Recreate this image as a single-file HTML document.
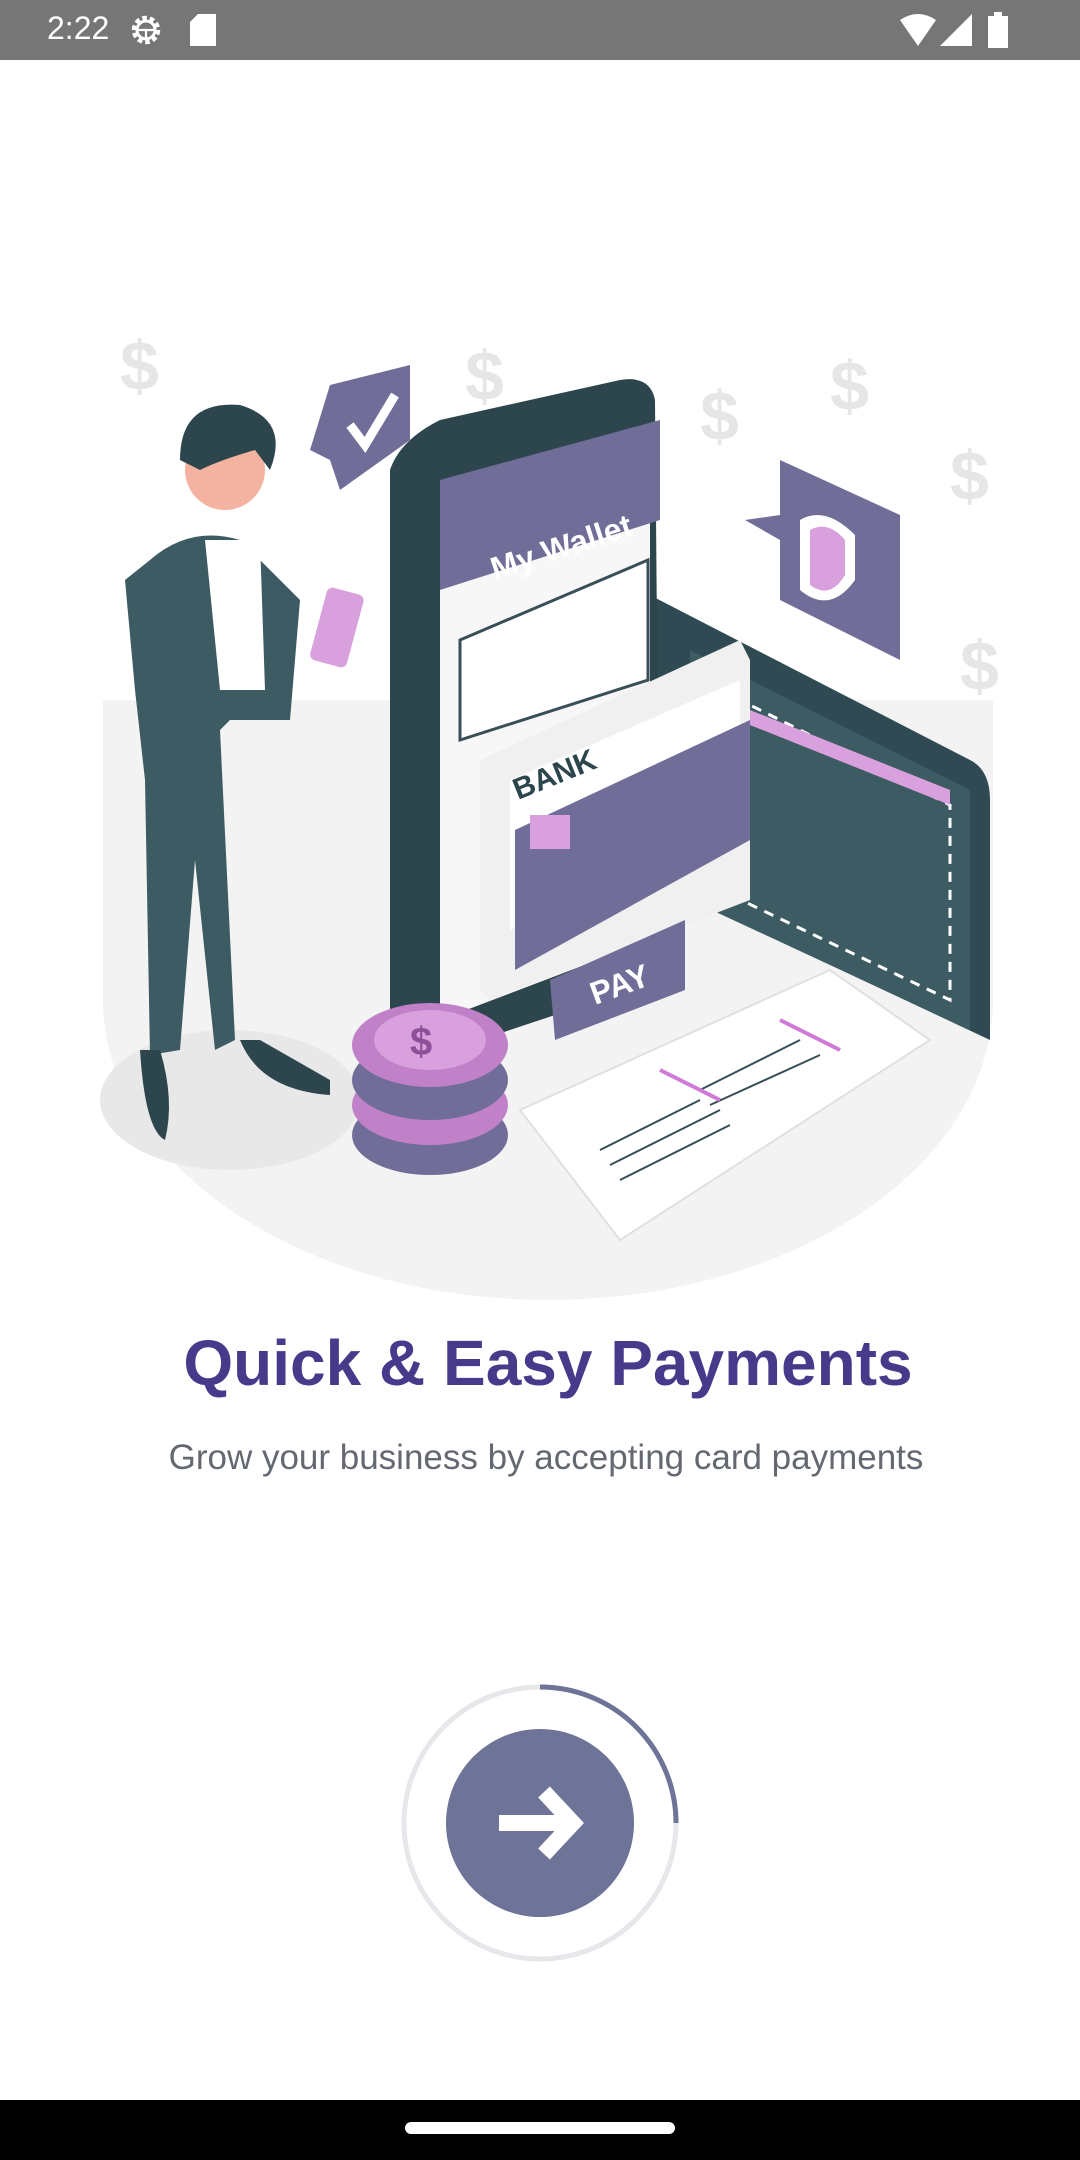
<!DOCTYPE html>
<html><head><meta charset="utf-8">
<style>
html,body{margin:0;padding:0;background:#fff;}
body{width:1080px;height:2160px;position:relative;overflow:hidden;font-family:"Liberation Sans",sans-serif;}
.sb{position:absolute;left:0;top:0;width:1080px;height:60px;background:#767676;}
.time{position:absolute;left:47px;top:10px;color:#fff;font-size:32px;}
.title{position:absolute;left:8px;width:1080px;top:1326px;text-align:center;font-weight:bold;font-size:64px;color:#483a8a;}
.sub{position:absolute;left:6px;width:1080px;top:1438px;text-align:center;font-size:35px;color:#646870;}
.nav{position:absolute;left:0;top:2100px;width:1080px;height:60px;background:#000;}
.pill{position:absolute;left:405px;top:2122px;width:270px;height:12px;border-radius:6px;background:#fff;}
</style></head><body>
<div class="sb">
<div class="time">2:22</div>
<svg style="position:absolute;left:128px;top:12px" width="36" height="36" viewBox="0 0 24 24"><circle cx="12" cy="12" r="8" fill="none" stroke="#fff" stroke-width="3" stroke-dasharray="3 2"/><circle cx="12" cy="12" r="6" fill="none" stroke="#fff" stroke-width="2"/><path d="M6 12H18M12 12V18" stroke="#fff" stroke-width="1.5"/></svg>
<svg style="position:absolute;left:190px;top:14px" width="26" height="32" viewBox="0 0 13 16"><path d="M4 0H13V16H0V4Z" fill="#fff"/></svg>
<svg style="position:absolute;left:900px;top:14px" width="36" height="32" viewBox="0 0 18 16"><path d="M0 3Q9 -3 18 3L9 16Z" fill="#fff"/></svg>
<svg style="position:absolute;left:940px;top:14px" width="32" height="32" viewBox="0 0 16 16"><path d="M16 0V16H0Z" fill="#fff"/></svg>
<svg style="position:absolute;left:988px;top:12px" width="20" height="36" viewBox="0 0 10 18"><path d="M3 0H7V2H10V18H0V2H3Z" fill="#fff"/></svg>
</div>

<svg style="position:absolute;left:0;top:300px" width="1080" height="1020" viewBox="0 300 1080 1020">
<ellipse cx="548" cy="1000" rx="445" ry="300" fill="#f3f3f3"/>
<rect x="103" y="700" width="890" height="300" fill="#f3f3f3"/>
<rect x="0" y="1000" width="103" height="320" fill="#fff"/>
<rect x="993" y="1000" width="87" height="320" fill="#fff"/>
<ellipse cx="230" cy="1100" rx="130" ry="70" fill="#e8e8e8"/>
<g fill="#e6e6e6" font-family="Liberation Sans" font-weight="bold" font-size="70"><text x="120" y="390">$</text><text x="465" y="400">$</text><text x="700" y="440">$</text><text x="830" y="410">$</text><text x="950" y="500">$</text><text x="960" y="690">$</text></g>
<path d="M640 590 L970 760 Q990 770 990 800 V1040 L650 880 Z" fill="#2f4a52"/>
<path d="M690 650 L970 790 V1030 L690 900Z" fill="#3c5b63"/>
<path d="M720 690 L950 805 V1000 L720 890Z" fill="none" stroke="#fff" stroke-width="3" stroke-dasharray="10 8"/>
<path d="M700 690 L950 790 V805 L700 705Z" fill="#d8a1de"/>
<path d="M390 470 Q400 440 440 420 L620 380 Q650 375 655 400 L660 980 L420 1060 Q390 1060 390 1030Z" fill="#2d454d"/>
<path d="M440 540 L650 430 V940 L440 1020Z" fill="#f7f7f7"/>
<path d="M440 480 L660 420 V520 L440 590Z" fill="#706d98"/>
<text x="495" y="580" fill="#fff" font-family="Liberation Sans" font-weight="bold" font-size="32" transform="rotate(-18 495 580)">My Wallet</text>
<path d="M460 640 L648 560 V680 L460 740Z" fill="#fff" stroke="#394f58" stroke-width="3"/>
<path d="M480 760 L740 640 L750 660 V900 L490 1000 L480 990Z" fill="#f0f0f0"/>
<path d="M510 780 L740 680 V830 L510 930Z" fill="#fff"/>
<text x="518" y="800" fill="#2d454d" font-family="Liberation Sans" font-weight="bold" font-size="30" transform="rotate(-22 518 800)">BANK</text>
<path d="M515 830 L750 720 V840 L515 970Z" fill="#706d98"/>
<rect x="530" y="815" width="40" height="34" fill="#d8a1de"/>
<path d="M550 980 L685 920 V990 L555 1040Z" fill="#706d98"/>
<text x="595" y="1005" fill="#fff" font-family="Liberation Sans" font-weight="bold" font-size="32" transform="rotate(-20 595 1005)">PAY</text>
<path d="M520 1110 L830 970 L930 1040 L620 1240Z" fill="#fff" stroke="#e0e0e0" stroke-width="2"/>
<g stroke="#394f58" stroke-width="2"><path d="M600 1150 L700 1100M610 1165L720 1110M620 1180L730 1125M700 1090L800 1040M710 1105L820 1055"/></g>
<g stroke="#d07ad8" stroke-width="4"><path d="M660 1070 L720 1100M780 1020L840 1050"/></g>
<ellipse cx="430" cy="1135" rx="78" ry="40" fill="#706d98"/>
<ellipse cx="430" cy="1105" rx="78" ry="40" fill="#c081c8"/>
<ellipse cx="430" cy="1080" rx="78" ry="40" fill="#706d98"/>
<ellipse cx="430" cy="1045" rx="78" ry="42" fill="#c081c8"/>
<ellipse cx="430" cy="1040" rx="56" ry="30" fill="#d8a1de"/>
<text x="410" y="1055" fill="#8e4e98" font-family="Liberation Sans" font-weight="bold" font-size="40">$</text>
<path d="M330 385 L410 365 V440 L340 490 L330 460 L310 450Z" fill="#706d98"/>
<path d="M350 425 L365 445 L395 395" stroke="#fff" stroke-width="9" fill="none"/>
<path d="M780 460 L900 515 V660 L780 600 V540 L745 520 L780 515Z" fill="#706d98"/>
<path d="M800 520 Q825 505 855 535 V580 Q830 615 800 590Z" fill="#fff"/>
<path d="M810 530 Q828 520 845 540 V575 Q830 600 810 585Z" fill="#d8a1de"/>
<path d="M150 560 Q190 525 240 540 L300 600 L290 720 L230 720 L220 730 L235 1040 L215 1050 L195 860 L180 1050 L150 1055 L145 780 L135 690 L125 580Z" fill="#3c5b63"/>
<path d="M205 540 H260 L265 690 H220Z" fill="#fff"/>
<circle cx="225" cy="470" r="40" fill="#f3b3a0"/>
<path d="M180 460 Q180 400 240 405 Q290 420 270 470 L255 450 Q220 460 200 470Z" fill="#2d454d"/>
<path d="M140 1050 Q145 1130 165 1140 Q175 1100 160 1050Z" fill="#2d454d"/>
<path d="M240 1040 Q260 1090 330 1095 V1080 L260 1040Z" fill="#2d454d"/>
<rect x="318" y="590" width="38" height="75" rx="6" transform="rotate(15 337 627)" fill="#d8a1de"/>
</svg>

<div class="title">Quick &amp; Easy Payments</div>
<div class="sub">Grow your business by accepting card payments</div>

<svg style="position:absolute;left:395px;top:1678px" width="290" height="290" viewBox="0 0 290 290">
<circle cx="145" cy="145" r="136" fill="none" stroke="#e6e7ea" stroke-width="5"/>
<path d="M145 9 A136 136 0 0 1 281 145" fill="none" stroke="#6e7398" stroke-width="5"/>
<circle cx="145" cy="145" r="94" fill="#6e7398"/>
<path d="M104 145 H178 M149 114 L178 145 L149 176" fill="none" stroke="#fff" stroke-width="16" stroke-linejoin="miter"/>
</svg>

<div class="nav"></div>
<div class="pill"></div>
</body></html>
